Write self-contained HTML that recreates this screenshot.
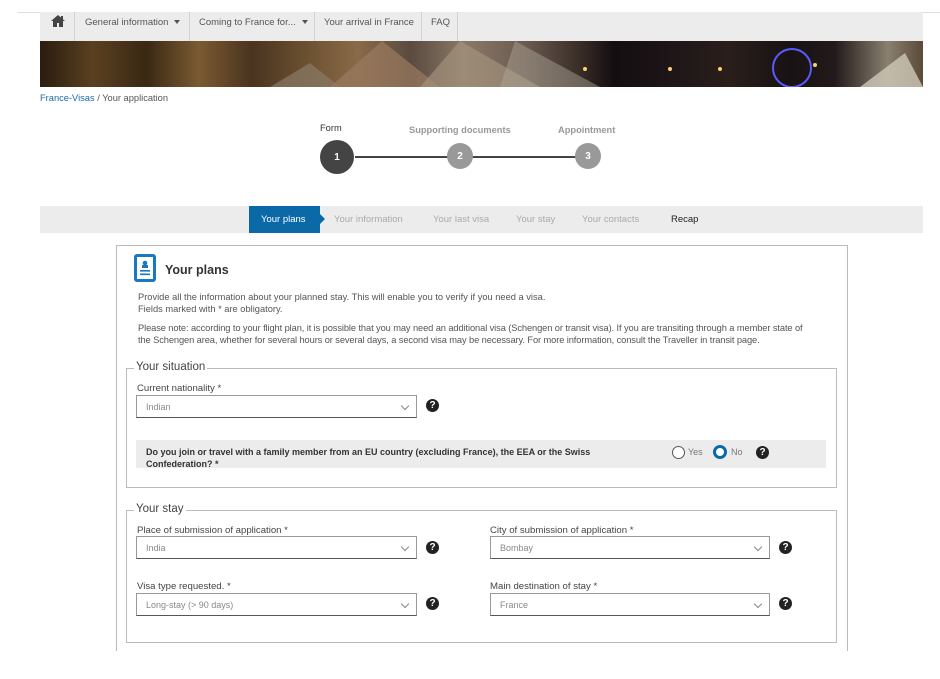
<!DOCTYPE html>
<html><head><meta charset="utf-8"><style>
*{margin:0;padding:0;box-sizing:border-box}
body{width:940px;height:679px;background:#fff;font-family:"Liberation Sans",sans-serif;position:relative;overflow:hidden;color:#444}
.a{position:absolute;white-space:nowrap}
.nav{left:40px;top:12px;width:883px;height:29px;background:#ececec}
.topline{left:18px;top:12px;width:922px;height:1px;background:#ddd}
.sep{top:12px;width:1px;height:29px;background:#d2d2d2}
.nt{top:17px;font-size:9.5px;color:#555}
.caret{display:inline-block;border-left:3.5px solid transparent;border-right:3.5px solid transparent;border-top:4px solid #555;margin-left:6px;vertical-align:1px}
.banner{left:40px;top:41px;width:883px;height:46px;background:linear-gradient(90deg,#2a1c10 0%,#5a4020 6%,#3a2814 12%,#7a5a30 18%,#4a3420 24%,#6a5030 30%,#8a6a48 36%,#5a4a40 42%,#8a7a68 48%,#6a5a50 55%,#3a2e28 61%,#140e10 65%,#1e1618 72%,#2a1e1a 78%,#181214 85%,#221a1a 90%,#8a8070 96%,#5a4a38 100%)}
.lbl{font-size:9.6px;color:#444}
.sel{height:23px;border:1px solid #999;border-bottom:1px solid #555;background:#fff;font-size:9px;color:#888;padding:6px 9px}
.sel:after{content:"";position:absolute;right:8px;top:7px;width:5px;height:5px;border-right:1px solid #888;border-bottom:1px solid #888;transform:rotate(45deg)}
.help{width:13px;height:13px;border-radius:50%;background:#222;color:#fff;font-size:10px;font-weight:bold;text-align:center;line-height:13px}
.fs{border:1px solid #bbb}
.lg{font-size:11.5px;color:#444;background:#fff;padding:0 2px}
.p{font-size:9.3px;color:#555}
.tb{top:214px;font-size:9.5px;color:#aaa}
</style></head><body>
<div class="a topline"></div>
<div class="a nav"></div>
<svg class="a" style="left:50px;top:14px" width="16" height="13" viewBox="0 0 16 13"><path d="M8 1L1 7h2v6h4V9h2v4h4V7h2z" fill="#444"/><rect x="11" y="2" width="2" height="3" fill="#444"/></svg>
<div class="a sep" style="left:74px"></div>
<div class="a nt" style="left:85px">General information<span class="caret"></span></div>
<div class="a sep" style="left:189px"></div>
<div class="a nt" style="left:199px">Coming to France for...<span class="caret"></span></div>
<div class="a sep" style="left:314px"></div>
<div class="a nt" style="left:324px">Your arrival in France</div>
<div class="a sep" style="left:421px"></div>
<div class="a nt" style="left:431px">FAQ</div>
<div class="a sep" style="left:457px"></div>
<div class="a banner"></div>
<svg class="a" style="left:40px;top:41px" width="883" height="46">
<polygon points="230,46 270,22 300,46" fill="#8a7a68" opacity=".7"/>
<polygon points="290,46 342,0 400,46" fill="#9a7a60" opacity=".7"/>
<polygon points="380,46 420,0 500,46" fill="#a89880" opacity=".6"/>
<polygon points="460,46 475,0 560,46" fill="#b0a898" opacity=".45"/>
<circle cx="752" cy="27" r="19" fill="none" stroke="#5a5aff" stroke-width="2"/>
<polygon points="820,46 865,12 883,46" fill="#d0c8b8" opacity=".8"/>
<circle cx="545" cy="28" r="2" fill="#ffd070"/><circle cx="630" cy="28" r="2" fill="#ffd070"/><circle cx="680" cy="28" r="2" fill="#ffd070"/><circle cx="775" cy="24" r="2" fill="#ffd070"/>
</svg>
<div class="a" style="left:40px;top:93px;font-size:9.3px;color:#555"><span style="color:#1a6aa8">France-Visas</span> / Your application</div>

<div class="a" style="left:320px;top:123px;font-size:9.3px;color:#333">Form</div>
<div class="a" style="left:409px;top:125px;font-size:9.3px;color:#999;font-weight:bold">Supporting documents</div>
<div class="a" style="left:558px;top:125px;font-size:9.3px;color:#999;font-weight:bold">Appointment</div>
<div class="a" style="left:355px;top:156px;width:230px;height:2px;background:#444"></div>
<div class="a" style="left:320px;top:140px;width:34px;height:34px;border-radius:50%;background:#444;color:#fff;font-size:10px;font-weight:bold;text-align:center;line-height:36px">1</div>
<div class="a" style="left:447px;top:143px;width:26px;height:26px;border-radius:50%;background:#999;color:#fff;font-size:10px;font-weight:bold;text-align:center;line-height:28px">2</div>
<div class="a" style="left:575px;top:143px;width:26px;height:26px;border-radius:50%;background:#999;color:#fff;font-size:10px;font-weight:bold;text-align:center;line-height:28px">3</div>

<div class="a" style="left:40px;top:206px;width:883px;height:27px;background:#ececec"></div>
<div class="a" style="left:249px;top:206px;width:71px;height:27px;background:#0b69a8;color:#fff;font-size:9.5px;padding:8px 0 0 12px">Your plans</div>
<div class="a" style="left:320px;top:214px;border-top:5px solid transparent;border-bottom:5px solid transparent;border-left:5px solid #0b69a8"></div>
<div class="a tb" style="left:334px">Your information</div>
<div class="a tb" style="left:433px">Your last visa</div>
<div class="a tb" style="left:516px">Your stay</div>
<div class="a tb" style="left:582px">Your contacts</div>
<div class="a tb" style="left:671px;color:#222">Recap</div>

<div class="a" style="left:116px;top:245px;width:732px;height:406px;border:1px solid #bbb;border-bottom:none"></div>
<svg class="a" style="left:134px;top:254px" width="22" height="28" viewBox="0 0 22 28"><rect x="1.5" y="1.5" width="19" height="25" rx="1.5" fill="#fff" stroke="#1a78c2" stroke-width="3"/><circle cx="11" cy="9" r="2.3" fill="#1a78c2"/><rect x="8" y="11" width="6" height="3" fill="#1a78c2"/><rect x="6" y="16" width="10" height="1.6" fill="#1a78c2"/><rect x="6" y="19.5" width="10" height="1.6" fill="#1a78c2"/></svg>
<div class="a" style="left:165px;top:263px;font-size:12.5px;font-weight:bold;color:#333">Your plans</div>
<div class="a p" style="left:138px;top:292px">Provide all the information about your planned stay. This will enable you to verify if you need a visa.</div>
<div class="a p" style="left:138px;top:304px">Fields marked with * are obligatory.</div>
<div class="a p" style="left:138px;top:323px;letter-spacing:-0.1px">Please note: according to your flight plan, it is possible that you may need an additional visa (Schengen or transit visa). If you are transiting through a member state of</div>
<div class="a p" style="left:138px;top:335px;letter-spacing:-0.1px">the Schengen area, whether for several hours or several days, a second visa may be necessary. For more information, consult the Traveller in transit page.</div>

<div class="a fs" style="left:126px;top:368px;width:711px;height:120px"></div>
<div class="a lg" style="left:134px;top:361px">Your situation</div>
<div class="a lbl" style="left:137px;top:383px">Current nationality *</div>
<div class="a sel" style="left:136px;top:395px;width:281px">Indian</div>
<div class="a help" style="left:426px;top:399px">?</div>
<div class="a" style="left:136px;top:440px;width:690px;height:28px;background:#ececec"></div>
<div class="a" style="left:146px;top:446px;font-size:9px;font-weight:bold;color:#333;line-height:12px">Do you join or travel with a family member from an EU country (excluding France), the EEA or the Swiss<br>Confederation? *</div>
<div class="a" style="left:672px;top:446px;width:13px;height:13px;border-radius:50%;border:1px solid #555;background:#fff"></div>
<div class="a" style="left:688px;top:447px;font-size:9px;color:#777">Yes</div>
<div class="a" style="left:713px;top:445px;width:14px;height:14px;border-radius:50%;border:3.5px solid #0b69a8;background:#fff"></div>
<div class="a" style="left:731px;top:447px;font-size:9px;color:#777">No</div>
<div class="a help" style="left:756px;top:446px">?</div>

<div class="a fs" style="left:126px;top:510px;width:711px;height:133px"></div>
<div class="a lg" style="left:134px;top:503px">Your stay</div>
<div class="a lbl" style="left:137px;top:525px">Place of submission of application *</div>
<div class="a sel" style="left:136px;top:536px;width:281px">India</div>
<div class="a help" style="left:426px;top:541px">?</div>
<div class="a lbl" style="left:490px;top:525px">City of submission of application *</div>
<div class="a sel" style="left:490px;top:536px;width:280px">Bombay</div>
<div class="a help" style="left:779px;top:541px">?</div>
<div class="a lbl" style="left:137px;top:581px">Visa type requested. *</div>
<div class="a sel" style="left:136px;top:593px;width:281px">Long-stay (&gt; 90 days)</div>
<div class="a help" style="left:426px;top:597px">?</div>
<div class="a lbl" style="left:490px;top:581px">Main destination of stay *</div>
<div class="a sel" style="left:490px;top:593px;width:280px">France</div>
<div class="a help" style="left:779px;top:597px">?</div>
</body></html>
